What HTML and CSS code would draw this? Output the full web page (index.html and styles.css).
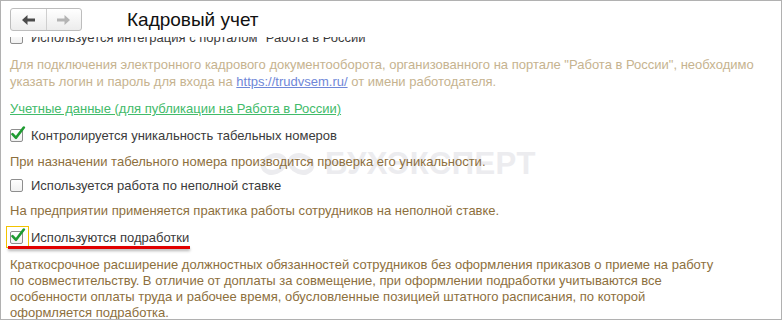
FILE: index.html
```html
<!DOCTYPE html>
<html lang="ru">
<head>
<meta charset="utf-8">
<title>Кадровый учет</title>
<link rel="stylesheet" href="styles.css">
</head>
<body>
<div class="window">
  <div class="header">
    <div class="nav">
      <button class="nav-btn nav-back" type="button" aria-label="Назад">
        <svg width="13" height="10" viewBox="0 0 13 10"><path d="M0 5 L5.5 0 V3.4 H13 V6.6 H5.5 V10 Z" fill="#4b4b4b"/></svg>
      </button>
      <button class="nav-btn nav-fwd" type="button" aria-label="Вперед">
        <svg width="13" height="10" viewBox="0 0 13 10"><path d="M13 5 L7.5 0 V3.4 H0 V6.6 H7.5 V10 Z" fill="#b4b4b4"/></svg>
      </button>
    </div>
    <h1 class="title">Кадровый учет</h1>
  </div>
  <div class="content">
    <div class="watermark" aria-hidden="true">
      <svg class="wm-logo" width="58" height="26" viewBox="0 0 58 26">
        <ellipse cx="15" cy="13" rx="11" ry="8" transform="rotate(-20 15 13)" fill="none" stroke="#ececef" stroke-width="5"/>
        <ellipse cx="42" cy="13" rx="11" ry="8" transform="rotate(20 42 13)" fill="none" stroke="#ececef" stroke-width="5"/>
      </svg>
      <span class="wm-text">БУХЭКСПЕРТ</span>
    </div>
    <div class="list">
      <div class="cb-row row-1">
        <span class="box"></span>
        <span class="label">Используется интеграция с порталом "Работа в России"</span>
      </div>
      <p class="note note-disabled note-1">Для подключения электронного кадрового документооборота, организованного на портале "Работа в России", необходимо<br>указать логин и пароль для входа на <a class="link-blue" href="#">https://trudvsem.ru/</a> от имени работодателя.</p>
      <a class="link-green" href="#">Учетные данные (для публикации на Работа в России)</a>
      <div class="cb-row row-2">
        <span class="box checked"><svg class="tick" width="16" height="16" viewBox="0 0 16 16"><path d="M2.5 8.2 L6 11.8 L13.8 1.5" fill="none" stroke="#1e9b31" stroke-width="2.6" stroke-linecap="round" stroke-linejoin="round"/></svg></span>
        <span class="label">Контролируется уникальность табельных номеров</span>
      </div>
      <p class="note note-2">При назначении табельного номера производится проверка его уникальности.</p>
      <div class="cb-row row-3">
        <span class="box"></span>
        <span class="label">Используется работа по неполной ставке</span>
      </div>
      <p class="note note-3">На предприятии применяется практика работы сотрудников на неполной ставке.</p>
      <div class="cb-row row-4">
        <span class="box checked focused"><svg class="tick" width="16" height="16" viewBox="0 0 16 16"><path d="M2.5 8.2 L6 11.8 L13.8 1.5" fill="none" stroke="#1e9b31" stroke-width="2.6" stroke-linecap="round" stroke-linejoin="round"/></svg></span>
        <span class="label">Используются подработки</span>
        <span class="underline-mark"></span>
      </div>
      <p class="note note-4">Краткосрочное расширение должностных обязанностей сотрудников без оформления приказов о приеме на работу<br>по совместительству. В отличие от доплаты за совмещение, при оформлении подработки учитываются все<br>особенности оплаты труда и рабочее время, обусловленные позицией штатного расписания, по которой<br>оформляется подработка.</p>
    </div>
  </div>
</div>
</body>
</html>
```
FILE: styles.css
```css
html, body {
  margin: 0;
  padding: 0;
  background: #ffffff;
}

body {
  font-family: "Liberation Sans", Arial, sans-serif;
}

.window {
  width: 782px;
  height: 320px;
  box-sizing: border-box;
  border: 1px solid #b1b1b1;
  background: #ffffff;
  display: flex;
  flex-direction: column;
  overflow: hidden;
}

.header {
  height: 36px;
  flex: 0 0 36px;
  display: flex;
  align-items: flex-start;
  background: #ffffff;
}

.nav {
  margin: 7px 0 0 9px;
  display: flex;
  width: 72px;
  height: 23px;
  box-sizing: border-box;
  border: 1px solid #bdbdbd;
  border-radius: 3px;
  overflow: hidden;
  background: linear-gradient(#ffffff, #ececec);
}

.nav-btn {
  flex: 1 1 0;
  margin: 0;
  padding: 0;
  border: 0;
  background: transparent;
  display: flex;
  align-items: center;
  justify-content: center;
}

.nav-back {
  border-right: 1px solid #cfcfcf;
}

.title {
  margin: 7px 0 0 45px;
  font-size: 19px;
  line-height: 23px;
  font-weight: normal;
  color: #111111;
}

.content {
  position: relative;
  flex: 1 1 auto;
  overflow: hidden;
  padding-left: 9px;
}

.list {
  position: relative;
  margin-top: -11px;
  font-size: 13px;
}

.cb-row {
  position: relative;
  display: flex;
  align-items: center;
  gap: 8px;
  height: 22px;
  color: #3b3b3b;
}

.box {
  position: relative;
  width: 13px;
  height: 13px;
  flex: 0 0 13px;
  box-sizing: border-box;
  border: 1px solid #8e8e8e;
  border-radius: 2px;
  background: linear-gradient(#ffffff, #f1f1f1);
}

.tick {
  position: absolute;
  left: -1px;
  top: -4px;
}

.focused::after {
  content: "";
  position: absolute;
  left: -5px;
  top: -6px;
  right: -7px;
  bottom: -5px;
  border: 1px solid #f3c300;
}

.underline-mark {
  position: absolute;
  left: -2px;
  top: 20px;
  width: 182px;
  height: 3px;
  background: #e10000;
  box-shadow: 0 2px 3px rgba(0, 0, 0, 0.3);
}

.note {
  margin: 0;
  line-height: 17px;
  color: #8d6f3d;
  white-space: nowrap;
}

.note-disabled {
  color: #c6b38f;
}

.link-blue {
  color: #6f87d8;
  text-decoration: underline;
}

.link-green {
  display: block;
  line-height: 17px;
  color: #42bb6a;
  text-decoration: underline;
}

.row-1 { margin-top: 0; }
.note-1 { margin-top: 8px; }
.link-green { margin-top: 10px; }
.row-2 { margin-top: 7px; }
.note-2 { margin-top: 7px; }
.row-3 { margin-top: 4px; }
.note-3 { margin-top: 6px; }
.row-4 { margin-top: 7px; }
.note-4 { margin-top: 9px; line-height: 16px; }

.watermark {
  position: absolute;
  left: 258px;
  top: 109px;
  display: flex;
  align-items: center;
  gap: 8px;
  pointer-events: none;
}

.wm-text {
  font-size: 31px;
  font-weight: bold;
  color: #ececef;
  letter-spacing: 0.5px;
}
```
